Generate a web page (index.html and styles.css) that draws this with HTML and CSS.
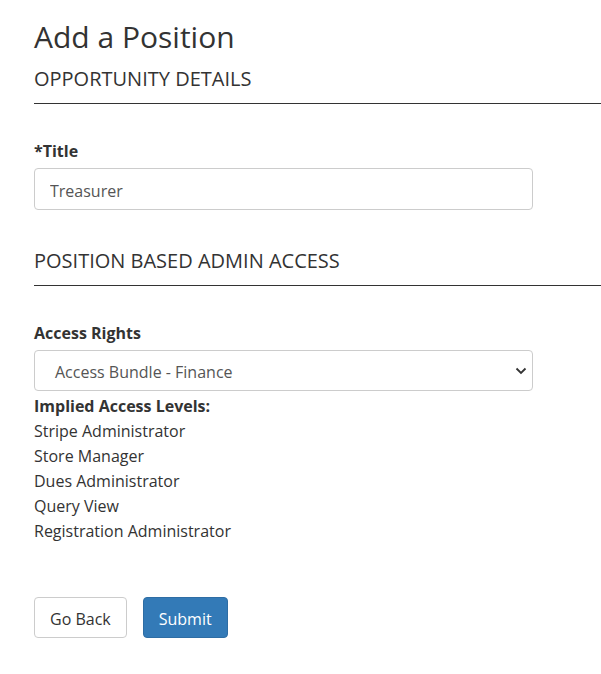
FILE: index.html
```html
<!DOCTYPE html>
<html>
<head>
<meta charset="utf-8">
<link rel="stylesheet" href="styles.css">
</head>
<body>
<main class="page">
  <h1 class="title">Add a Position</h1>
  <h2 class="section">OPPORTUNITY DETAILS</h2>
  <hr class="rule">
  <div class="field">
    <label class="label">*Title</label>
    <input class="input" type="text" value="Treasurer">
  </div>
  <h2 class="section section-2">POSITION BASED ADMIN ACCESS</h2>
  <hr class="rule">
  <div class="field">
    <label class="label">Access Rights</label>
    <div class="select">
      <span class="select-text">Access Bundle - Finance</span>
      <svg class="chev" width="12" height="8" viewBox="0 0 12 8"><path d="M1.5 1.5 L6 6 L10.5 1.5" fill="none" stroke="#333" stroke-width="1.8"/></svg>
    </div>
  </div>
  <div class="implied">
    <div class="implied-title">Implied Access Levels:</div>
    <div>Stripe Administrator</div>
    <div>Store Manager</div>
    <div>Dues Administrator</div>
    <div>Query View</div>
    <div>Registration Administrator</div>
  </div>
  <div class="actions">
    <button class="btn btn-default">Go Back</button>
    <button class="btn btn-primary">Submit</button>
  </div>
</main>
</body>
</html>
```
FILE: styles.css
```css
html, body {
  margin: 0;
  padding: 0;
  background: #fff;
}
body {
  font-family: "Open Sans", "Noto Sans", sans-serif;
  font-size: 16px;
  color: #333;
  overflow: hidden;
}
.page {
  padding: 16px 0 0 34px;
  width: 567px;
  overflow: hidden;
}
.title {
  font-size: 30px;
  font-weight: 500;
  margin: 0;
  line-height: 42px;
  color: #333;
}
.section {
  font-size: 20px;
  font-weight: 500;
  margin: 9px 0 0 0;
  line-height: 24px;
  color: #333;
}
.section-2 {
  margin-top: 39px;
}
.rule {
  border: 0;
  border-top: 1px solid #333;
  margin: 12px 0 0 0;
  width: 567px;
}
.field {
  margin-top: 36px;
  display: flex;
  flex-direction: column;
}
.label {
  font-weight: 700;
  line-height: 22px;
  margin-bottom: 6px;
}
.input {
  box-sizing: border-box;
  width: 499px;
  height: 42px;
  border: 1px solid #ccc;
  border-radius: 4px;
  padding: 3px 15px 0 15px;
  font-family: inherit;
  font-size: 16px;
  color: #555;
  outline: none;
}
.select {
  box-sizing: border-box;
  width: 499px;
  height: 41px;
  border: 1px solid #ccc;
  border-radius: 4px;
  padding: 0 5px 0 20px;
  display: flex;
  align-items: center;
  justify-content: space-between;
  color: #555;
}
.select-text {
  padding-top: 2px;
}
.implied {
  line-height: 25px;
  margin-top: 3px;
}
.implied-title {
  font-weight: 700;
}
.actions {
  margin-top: 53px;
  display: flex;
  gap: 16px;
}
.btn {
  box-sizing: border-box;
  height: 41px;
  border-radius: 4px;
  font-family: inherit;
  font-size: 16px;
  padding: 2px 15px 0 15px;
  cursor: pointer;
}
.btn-default {
  background: #fff;
  border: 1px solid #ccc;
  color: #333;
}
.btn-primary {
  background: #337ab7;
  border: 1px solid #2e6da4;
  color: #fff;
}
```
